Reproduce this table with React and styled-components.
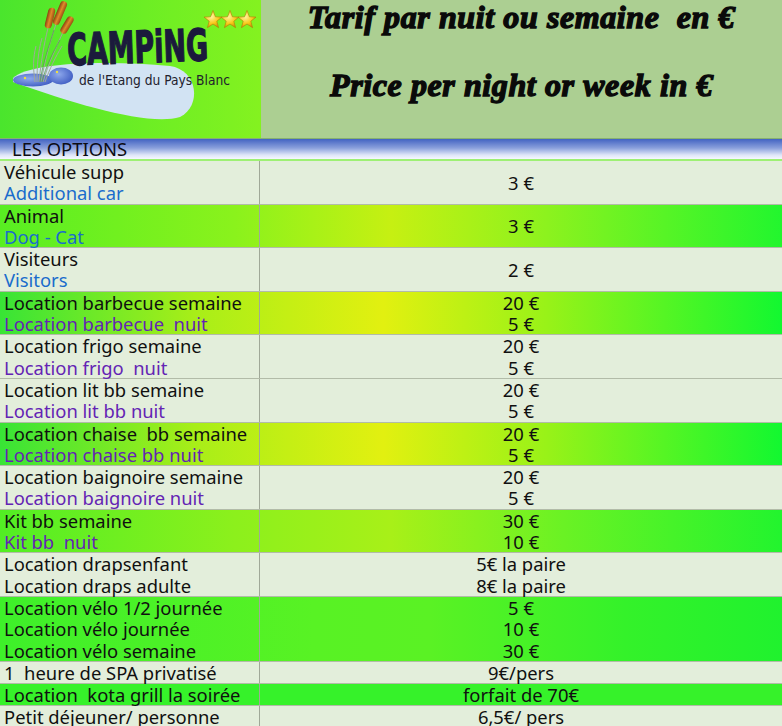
import React from 'react';
import styled, { createGlobalStyle } from 'styled-components';

const GlobalStyle = createGlobalStyle`
  html, body {
    margin: 0;
    padding: 0;
    background: #e3eedb;
    overflow: hidden;
  }
  body {
    font-family: "Noto Sans", "Open Sans", sans-serif;
  }
`;

const Page = styled.div`
  width: 782px;
`;

const Header = styled.header`
  display: grid;
  grid-template-columns: 261px 1fr;
  height: 139px;
  border-bottom: 1px solid #88b070;
  box-sizing: border-box;
`;

const LogoCell = styled.div`
  background: linear-gradient(90deg, #4ae52d 0%, #6cee24 55%, #84f220 100%);
  display: flex;
`;

const TitleCell = styled.div`
  background: #accf92;
  display: flex;
  flex-direction: column;
  align-items: center;
  gap: 34px;
  padding-top: 0;
`;

const TitleLine = styled.div`
  font-family: "Liberation Serif", "DejaVu Serif", serif;
  font-style: italic;
  font-weight: bold;
  font-size: 32px;
  line-height: 34px;
  color: #0a0a0a;
  -webkit-text-stroke: 1.4px #0a0a0a;
  letter-spacing: ${(p) => p.$spacing}px;
  white-space: pre;
`;

const SectionBar = styled.div`
  height: 20px;
  line-height: 20px;
  padding-left: 12px;
  font-size: 18.4px;
  color: #0c0c14;
  background: linear-gradient(180deg, #4263c2 0%, #8aa0dc 45%, #dfe6f8 80%, #f6f8ff 100%);
  border-bottom: 2px solid #9ef074;
`;

const tones = {
  light: '#e3eedb',
  lime: 'linear-gradient(90deg, #58ee22 0%, #8af21c 30%, #c6f012 50%, #8cf21e 70%, #22f62e 100%)',
  yellow: 'linear-gradient(90deg, #38e436 0%, #a8ee18 25%, #e2f010 49%, #98f218 70%, #12f830 100%)',
  soft: 'linear-gradient(90deg, #52ee24 0%, #8cf01c 30%, #a8f018 50%, #6af224 72%, #22f42e 100%)',
  green: 'linear-gradient(90deg, #3ef02a 0%, #58f224 40%, #5af224 55%, #34f22a 80%, #20f22e 100%)',
  flat: '#36f22a',
};

const Row = styled.div`
  display: grid;
  grid-template-columns: 260px 1fr;
  background: ${(p) => tones[p.$tone]};
  border-bottom: 1px solid #b2bba8;
`;

const LabelCell = styled.div`
  padding-left: 4px;
  border-right: 1px solid #a0a898;
  display: flex;
  flex-direction: column;
`;

const PriceCell = styled.div`
  display: flex;
  flex-direction: column;
  align-items: center;
  justify-content: center;
`;

const Line = styled.div`
  font-size: 18.4px;
  line-height: 21.3px;
  height: 21.3px;
  white-space: pre;
  color: ${(p) => (p.$lang === 'en' ? '#1a6ccc' : p.$lang === 'alt' ? '#6424b4' : '#101010')};
`;

const rows = [
  { tone: 'light', labels: [['Véhicule supp'], ['Additional car', 'en']], prices: ['3 €'] },
  { tone: 'lime', labels: [['Animal'], ['Dog - Cat', 'en']], prices: ['3 €'] },
  { tone: 'light', labels: [['Visiteurs'], ['Visitors', 'en']], prices: ['2 €'] },
  { tone: 'yellow', labels: [['Location barbecue semaine'], ['Location barbecue  nuit', 'alt']], prices: ['20 €', '5 €'] },
  { tone: 'light', labels: [['Location frigo semaine'], ['Location frigo  nuit', 'alt']], prices: ['20 €', '5 €'] },
  { tone: 'light', labels: [['Location lit bb semaine'], ['Location lit bb nuit', 'alt']], prices: ['20 €', '5 €'] },
  { tone: 'yellow', labels: [['Location chaise  bb semaine'], ['Location chaise bb nuit', 'alt']], prices: ['20 €', '5 €'] },
  { tone: 'light', labels: [['Location baignoire semaine'], ['Location baignoire nuit', 'alt']], prices: ['20 €', '5 €'] },
  { tone: 'soft', labels: [['Kit bb semaine'], ['Kit bb  nuit', 'alt']], prices: ['30 €', '10 €'] },
  { tone: 'light', labels: [['Location drapsenfant'], ['Location draps adulte']], prices: ['5€ la paire', '8€ la paire'] },
  { tone: 'green', labels: [['Location vélo 1/2 journée'], ['Location vélo journée'], ['Location vélo semaine']], prices: ['5 €', '10 €', '30 €'] },
  { tone: 'light', labels: [['1  heure de SPA privatisé']], prices: ['9€/pers'] },
  { tone: 'flat', labels: [['Location  kota grill la soirée']], prices: ['forfait de 70€'] },
  { tone: 'light', labels: [['Petit déjeuner/ personne']], prices: ['6,5€/ pers'] },
];

function starPoints(cx, cy, R, r) {
  const pts = [];
  for (let i = 0; i < 10; i += 1) {
    const a = -Math.PI / 2 + (i * Math.PI) / 5;
    const rad = i % 2 === 0 ? R : r;
    pts.push(`${(cx + rad * Math.cos(a)).toFixed(1)},${(cy + rad * Math.sin(a)).toFixed(1)}`);
  }
  return pts.join(' ');
}

function Logo() {
  return (
    <svg width="261" height="138" viewBox="0 0 261 138">
      <defs>
        <linearGradient id="reed" x1="0" y1="0" x2="1" y2="0">
          <stop offset="0" stopColor="#8a4210" />
          <stop offset="0.5" stopColor="#e08a2a" />
          <stop offset="1" stopColor="#9a4c12" />
        </linearGradient>
        <radialGradient id="pond" cx="0.4" cy="0.4" r="0.7">
          <stop offset="0" stopColor="#8ea8ec" />
          <stop offset="1" stopColor="#3a58c0" />
        </radialGradient>
        <radialGradient id="star" cx="0.4" cy="0.35" r="0.7">
          <stop offset="0" stopColor="#fff6a0" />
          <stop offset="0.6" stopColor="#f8c818" />
          <stop offset="1" stopColor="#c88a08" />
        </radialGradient>
      </defs>
      <path d="M13 78 C 28 62, 110 60, 170 66 C 198 70, 202 106, 180 117 C 150 126, 80 106, 13 82 Z" fill="#d2e3f3" />
      <ellipse cx="33" cy="80" rx="20" ry="6.5" fill="url(#pond)" />
      <ellipse cx="61" cy="76" rx="12" ry="8.5" fill="url(#pond)" />
      <circle cx="25" cy="78" r="1.2" fill="#f0e040" />
      <circle cx="57" cy="72" r="1.2" fill="#f0e040" />
      <g stroke="#a0a898" strokeWidth="1" fill="none">
        <path d="M39 82 C 41 62, 44 44, 48 28" />
        <path d="M41 82 C 45 60, 50 42, 56 24" />
        <path d="M43 82 C 48 64, 56 48, 63 32" />
        <path d="M37 82 C 37 66, 38 52, 42 38" />
        <path d="M45 82 C 50 68, 55 58, 62 46" />
        <path d="M35 82 C 33 68, 33 58, 36 46" />
      </g>
      <g stroke="#5aa050" strokeWidth="0.8" fill="none">
        <path d="M40 82 C 43 62, 49 46, 54 30" />
        <path d="M42 82 C 46 66, 53 52, 60 40" />
      </g>
      <rect x="-3.5" y="-10.5" width="7" height="21" rx="3.5" fill="url(#reed)" transform="translate(50 18) rotate(14)" />
      <rect x="-3.5" y="-12.5" width="7" height="25" rx="3.5" fill="url(#reed)" transform="translate(60 13) rotate(23)" />
      <rect x="-3.5" y="-9.5" width="7" height="19" rx="3.5" fill="url(#reed)" transform="translate(67 25) rotate(31)" />
      <text
        x="67"
        y="63"
        textLength="141"
        lengthAdjust="spacingAndGlyphs"
        fontFamily="DejaVu Sans, sans-serif"
        fontWeight="bold"
        fontSize="44"
        fill="#1b1a3c"
        stroke="#1b1a3c"
        strokeWidth="1.5"
        transform="rotate(-2 130 45)"
      >
        CAMPiNG
      </text>
      <text
        x="79"
        y="85"
        textLength="151"
        lengthAdjust="spacingAndGlyphs"
        fontFamily="DejaVu Sans, sans-serif"
        fontSize="14.5"
        fill="#22222e"
      >
        de l'Etang du Pays Blanc
      </text>
      <polygon points={starPoints(213, 20, 9.5, 4)} fill="url(#star)" stroke="#b07a08" strokeWidth="0.6" />
      <polygon points={starPoints(230, 20, 9.5, 4)} fill="url(#star)" stroke="#b07a08" strokeWidth="0.6" />
      <polygon points={starPoints(247, 20, 9.5, 4)} fill="url(#star)" stroke="#b07a08" strokeWidth="0.6" />
    </svg>
  );
}

export default function App() {
  return (
    <Page>
      <GlobalStyle />
      <Header>
        <LogoCell>
          <Logo />
        </LogoCell>
        <TitleCell>
          <TitleLine $spacing={0.6}>Tarif par nuit ou semaine  en €</TitleLine>
          <TitleLine $spacing={0.6}>Price per night or week in €</TitleLine>
        </TitleCell>
      </Header>
      <SectionBar>LES OPTIONS</SectionBar>
      {rows.map((row) => (
        <Row key={row.labels[0][0]} $tone={row.tone}>
          <LabelCell>
            {row.labels.map(([text, lang]) => (
              <Line key={text} $lang={lang}>{text}</Line>
            ))}
          </LabelCell>
          <PriceCell>
            {row.prices.map((p, i) => (
              <Line key={`${p}-${i}`}>{p}</Line>
            ))}
          </PriceCell>
        </Row>
      ))}
    </Page>
  );
}
